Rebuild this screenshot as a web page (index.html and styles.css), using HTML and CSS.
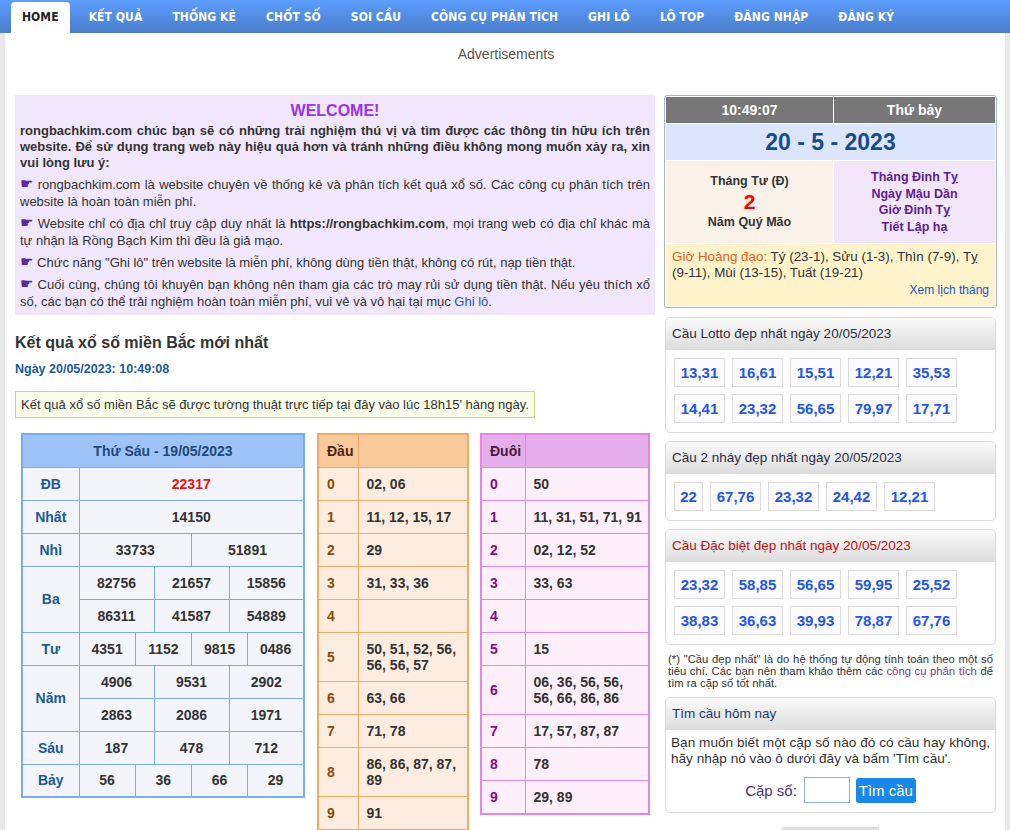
FILE: index.html
```html
<!DOCTYPE html>
<html lang="vi">
<head>
<meta charset="utf-8">
<title>Rồng Bạch Kim</title>
<link rel="stylesheet" href="styles.css">
</head>
<body>
<nav class="nav">
  <ul class="nav-list">
    <li class="nav-item active">HOME</li>
    <li class="nav-item">KẾT QUẢ</li>
    <li class="nav-item">THỐNG KÊ</li>
    <li class="nav-item">CHỐT SỐ</li>
    <li class="nav-item">SOI CẦU</li>
    <li class="nav-item">CÔNG CỤ PHÂN TÍCH</li>
    <li class="nav-item">GHI LÔ</li>
    <li class="nav-item">LÔ TOP</li>
    <li class="nav-item">ĐĂNG NHẬP</li>
    <li class="nav-item">ĐĂNG KÝ</li>
  </ul>
</nav>
<div class="page">
  <div class="ads-top">Advertisements</div>
  <div class="main">
    <div class="left">
      <div class="welcome">
        <div class="welcome-title">WELCOME!</div>
        <p class="intro">rongbachkim.com chúc bạn sẽ có những trải nghiệm thú vị và tìm được các thông tin hữu ích trên website. Để sử dụng trang web này hiệu quả hơn và tránh những điều không mong muốn xảy ra, xin vui lòng lưu ý:</p>
        <p><span class="hand">☛</span> rongbachkim.com là website chuyên về thống kê và phân tích kết quả xổ số. Các công cụ phân tích trên website là hoàn toàn miễn phí.</p>
        <p><span class="hand">☛</span> Website chỉ có địa chỉ truy cập duy nhất là <b>https://rongbachkim.com</b>, mọi trang web có địa chỉ khác mà tự nhận là Rồng Bạch Kim thì đều là giả mạo.</p>
        <p><span class="hand">☛</span> Chức năng "Ghi lô" trên website là miễn phí, không dùng tiền thật, không có rút, nạp tiền thật.</p>
        <p><span class="hand">☛</span> Cuối cùng, chúng tôi khuyên bạn không nên tham gia các trò may rủi sử dụng tiền thật. Nếu yêu thích xổ số, các bạn có thể trải nghiệm hoàn toàn miễn phí, vui vẻ và vô hại tại mục <a class="link">Ghi lô</a>.</p>
      </div>

      <h2 class="kq-title">Kết quả xổ số miền Bắc mới nhất</h2>
      <div class="kq-date">Ngày 20/05/2023: 10:49:08</div>
      <div class="notice">Kết quả xổ số miền Bắc sẽ được tường thuật trực tiếp tại đây vào lúc 18h15' hàng ngày.</div>

      <div class="tables">
        <table class="kq">
          <colgroup>
            <col class="c-lbl"><col><col><col><col><col><col><col><col><col><col><col><col>
          </colgroup>
          <tr><th colspan="13" class="kq-head">Thứ Sáu - 19/05/2023</th></tr>
          <tr><td class="lbl">ĐB</td><td colspan="12" class="db">22317</td></tr>
          <tr><td class="lbl">Nhất</td><td colspan="12">14150</td></tr>
          <tr><td class="lbl">Nhì</td><td colspan="6">33733</td><td colspan="6">51891</td></tr>
          <tr><td class="lbl" rowspan="2">Ba</td><td colspan="4">82756</td><td colspan="4">21657</td><td colspan="4">15856</td></tr>
          <tr><td colspan="4">86311</td><td colspan="4">41587</td><td colspan="4">54889</td></tr>
          <tr><td class="lbl">Tư</td><td colspan="3">4351</td><td colspan="3">1152</td><td colspan="3">9815</td><td colspan="3">0486</td></tr>
          <tr><td class="lbl" rowspan="2">Năm</td><td colspan="4">4906</td><td colspan="4">9531</td><td colspan="4">2902</td></tr>
          <tr><td colspan="4">2863</td><td colspan="4">2086</td><td colspan="4">1971</td></tr>
          <tr><td class="lbl">Sáu</td><td colspan="4">187</td><td colspan="4">478</td><td colspan="4">712</td></tr>
          <tr><td class="lbl">Bảy</td><td colspan="3">56</td><td colspan="3">36</td><td colspan="3">66</td><td colspan="3">29</td></tr>
        </table>

        <table class="loto dau">
          <tr><th class="k">Đầu</th><th></th></tr>
          <tr><td class="k">0</td><td>02, 06</td></tr>
          <tr><td class="k">1</td><td>11, 12, 15, 17</td></tr>
          <tr><td class="k">2</td><td>29</td></tr>
          <tr><td class="k">3</td><td>31, 33, 36</td></tr>
          <tr><td class="k">4</td><td></td></tr>
          <tr><td class="k">5</td><td>50, 51, 52, 56,<br>56, 56, 57</td></tr>
          <tr><td class="k">6</td><td>63, 66</td></tr>
          <tr><td class="k">7</td><td>71, 78</td></tr>
          <tr><td class="k">8</td><td>86, 86, 87, 87,<br>89</td></tr>
          <tr><td class="k">9</td><td>91</td></tr>
        </table>

        <table class="loto duoi">
          <tr><th class="k">Đuôi</th><th></th></tr>
          <tr><td class="k">0</td><td>50</td></tr>
          <tr><td class="k">1</td><td>11, 31, 51, 71, 91</td></tr>
          <tr><td class="k">2</td><td>02, 12, 52</td></tr>
          <tr><td class="k">3</td><td>33, 63</td></tr>
          <tr><td class="k">4</td><td></td></tr>
          <tr><td class="k">5</td><td>15</td></tr>
          <tr><td class="k">6</td><td>06, 36, 56, 56,<br>56, 66, 86, 86</td></tr>
          <tr><td class="k">7</td><td>17, 57, 87, 87</td></tr>
          <tr><td class="k">8</td><td>78</td></tr>
          <tr><td class="k">9</td><td>29, 89</td></tr>
        </table>
      </div>
    </div>

    <div class="right">
      <div class="cal">
        <div class="cal-time">10:49:07</div>
        <div class="cal-day">Thứ bảy</div>
        <div class="cal-date">20 - 5 - 2023</div>
        <div class="cal-lunar">
          <div>Tháng Tư (Đ)</div>
          <div class="cal-num">2</div>
          <div>Năm Quý Mão</div>
        </div>
        <div class="cal-can">
          <div>Tháng Đinh Tỵ</div>
          <div>Ngày Mậu Dần</div>
          <div>Giờ Đinh Tỵ</div>
          <div>Tiết Lập hạ</div>
        </div>
        <div class="cal-hd">
          <div><span class="hd-lbl">Giờ Hoàng đạo:</span> Tý (23-1), Sửu (1-3), Thìn (7-9), Tỵ (9-11), Mùi (13-15), Tuất (19-21)</div>
          <div class="cal-link"><a class="link">Xem lịch tháng</a></div>
        </div>
      </div>

      <div class="panel">
        <div class="panel-head">Cầu Lotto đẹp nhất ngày 20/05/2023</div>
        <div class="panel-body nums">
          <span class="num">13,31</span><span class="num">16,61</span><span class="num">15,51</span><span class="num">12,21</span><span class="num">35,53</span>
          <span class="num">14,41</span><span class="num">23,32</span><span class="num">56,65</span><span class="num">79,97</span><span class="num">17,71</span>
        </div>
      </div>

      <div class="panel">
        <div class="panel-head">Cầu 2 nháy đẹp nhất ngày 20/05/2023</div>
        <div class="panel-body nums">
          <span class="num num-s">22</span><span class="num">67,76</span><span class="num">23,32</span><span class="num">24,42</span><span class="num">12,21</span>
        </div>
      </div>

      <div class="panel">
        <div class="panel-head red">Cầu Đặc biệt đẹp nhất ngày 20/05/2023</div>
        <div class="panel-body nums">
          <span class="num">23,32</span><span class="num">58,85</span><span class="num">56,65</span><span class="num">59,95</span><span class="num">25,52</span>
          <span class="num">38,83</span><span class="num">36,63</span><span class="num">39,93</span><span class="num">78,87</span><span class="num">67,76</span>
        </div>
      </div>

      <p class="footnote">(*) "Cầu đẹp nhất" là do hệ thống tự động tính toán theo một số tiêu chí. Các bạn nên tham khảo thêm các <a class="plink">công cụ phân tích</a> để tìm ra cặp số tốt nhất.</p>

      <div class="panel">
        <div class="panel-head navy">Tìm cầu hôm nay</div>
        <div class="panel-body find">
          <p class="find-text">Bạn muốn biết một cặp số nào đó có cầu hay không, hãy nhập nó vào ô dưới đây và bấm 'Tìm cầu'.</p>
          <div class="find-row">
            <label class="find-lbl">Cặp số:</label>
            <input class="find-input" type="text">
            <button class="find-btn">Tìm cầu</button>
          </div>
        </div>
      </div>

      <div class="ads-bottom"><span>Advertisements</span></div>
    </div>
  </div>
</div>
</body>
</html>
```

FILE: styles.css
```css
* { box-sizing: border-box; }
html, body { margin: 0; padding: 0; }
body {
  background: #e8e8e8;
  font-family: "Liberation Sans", Arial, sans-serif;
  font-size: 13px;
  color: #333;
  overflow: hidden;
}
.nav {
  height: 33px;
  background: linear-gradient(#5c9dfe, #4a7dca);
}
.nav-list {
  list-style: none;
  margin: 0;
  padding: 2px 0 0 11px;
  display: flex;
  gap: 8px;
}
.nav-item {
  height: 31px;
  line-height: 31px;
  padding: 0 11px;
  color: #fff;
  font-weight: bold;
  font-size: 12px;
  font-family: "DejaVu Sans Condensed", "DejaVu Sans", sans-serif;
  letter-spacing: 0.08px;
}
.nav-item.active {
  background: #fff;
  color: #222;
  border-radius: 4px 4px 0 0;
}
.page {
  width: 1000px;
  margin: 0 auto;
  background: #fff;
  padding: 0 8px 0 10px;
  min-height: 797px;
}
.ads-top {
  height: 62px;
  padding-top: 12px;
  text-align: center;
  font-size: 14px;
  line-height: 18px;
  color: #555;
}
.main {
  display: flex;
  gap: 9px;
  align-items: flex-start;
}
.left { width: 640px; }
.right { width: 333px; }

.welcome {
  background: #f0e7fc;
  padding: 4px 5px 5px;
  text-align: justify;
  font-size: 13px;
  line-height: 17px;
}
.welcome-title {
  text-align: center;
  color: #9933ee;
  font-weight: bold;
  font-size: 16px;
  line-height: 24px;
}
.welcome p { margin: 0 0 5px; }
.welcome p:last-child { margin-bottom: 0; }
.welcome p.intro { font-weight: bold; margin-bottom: 5px; line-height: 16px; }
.hand {
  font-family: "DejaVu Sans", sans-serif;
  color: #5b2a9c;
  font-size: 15px;
  line-height: 14px;
}
.link { color: #1a55cc; text-decoration: none; }

.kq-title {
  font-size: 16px;
  font-weight: bold;
  margin: 18px 0 0;
  line-height: 20px;
  color: #333;
}
.kq-date {
  margin-top: 9px;
  font-weight: bold;
  font-size: 12.5px;
  color: #1b5a9c;
  line-height: 15px;
}
.notice {
  display: inline-block;
  margin-top: 14px;
  border: 1px solid #b7e07c;
  background: #f8fce9;
  padding: 0 5px;
  height: 27px;
  line-height: 25px;
  font-size: 13px;
}

.tables {
  display: flex;
  align-items: flex-start;
  gap: 11px;
  margin-top: 15px;
  padding-left: 6px;
}
.kq {
  width: 284px;
  table-layout: fixed;
  border-collapse: collapse;
  border: 2px solid #79abf0;
  background: #f3f5fa;
}
.kq col.c-lbl { width: 57px; }
.kq th, .kq td {
  border: 1px solid #79abf0;
  height: 33px;
  padding: 0;
  text-align: center;
  font-weight: bold;
  font-size: 14px;
  line-height: 16px;
}
.kq th.kq-head {
  background: #9dc3f7;
  color: #1d4a7b;
}
.kq td.lbl { color: #1b5a96; }
.kq td.db { color: #ee1111; }

.loto {
  border-collapse: collapse;
  table-layout: fixed;
  font-size: 14px;
  font-weight: bold;
  line-height: 16px;
}
.loto th, .loto td {
  padding: 8px 8px;
  height: 33px;
  text-align: left;
  white-space: nowrap;
  vertical-align: middle;
}
.dau { width: 152px; border: 2px solid #f4a962; background: #fdede0; margin-left: 1px; }
.dau th, .dau td { border: 1px solid #f4a962; }
.dau th { background: #f9ca9c; color: #4e2410; }
.dau .k { width: 40px; }
.dau td.k { color: #8b4a06; }
.duoi { width: 170px; border: 2px solid #e584e1; background: #fdf0fb; }
.duoi th, .duoi td { border: 1px solid #e584e1; }
.duoi th { background: #e5ade9; color: #4a1a40; }
.duoi .k { width: 44px; }
.duoi td.k { color: #86088a; }

/* right column */
.cal {
  display: grid;
  grid-template-columns: 167px 1fr;
  gap: 1px;
  padding: 1px;
  border: 1px solid #a7b6cf;
  border-radius: 3px;
  background: #fff;
}
.cal-time, .cal-day {
  background: #777;
  color: #fff;
  font-weight: bold;
  font-size: 14px;
  height: 26px;
  line-height: 26px;
  text-align: center;
}
.cal-date {
  grid-column: 1 / 3;
  background: #dbe6fd;
  color: #1a4b8c;
  font-weight: bold;
  font-size: 23px;
  height: 36px;
  line-height: 36px;
  text-align: center;
}
.cal-lunar {
  background: #faf2e8;
  height: 82px;
  text-align: center;
  font-weight: bold;
  font-size: 12.5px;
  line-height: 16px;
  padding-top: 12px;
  color: #333;
}
.cal-num {
  color: #ff0000;
  font-size: 21px;
  line-height: 25px;
}
.cal-can {
  background: #f3e6fb;
  text-align: center;
  color: #5a1f8e;
  font-weight: bold;
  font-size: 12.5px;
  line-height: 16.7px;
  padding-top: 8px;
}
.cal-hd {
  grid-column: 1 / 3;
  background: #fff3cc;
  padding: 5px 6px 6px;
  font-size: 13.4px;
  line-height: 16px;
  color: #333;
  height: 62px;
}
.hd-lbl { color: #e2601c; }
.cal-link { text-align: right; font-size: 12px; margin-top: 1px; }

.panel {
  margin-top: 8px;
  border: 1px solid #d9d9d9;
  border-radius: 5px;
  margin-left: 1px;
  margin-right: 1px;
  background: #fff;
  overflow: hidden;
}
.cal + .panel { margin-top: 9px; }
.panel-head {
  height: 32px;
  line-height: 32px;
  padding: 0 6px;
  font-size: 13.5px;
  color: #2b2d40;
  background: linear-gradient(#fafafa, #dcdcdc);
}
.panel-head.red { color: #c40d0d; }
.panel-head.navy { color: #173a6a; }
.panel-body.nums {
  padding: 8px 8px 2px;
  display: flex;
  flex-wrap: wrap;
  gap: 0 7px;
}
.num {
  width: 51px;
  height: 29px;
  margin-bottom: 7px;
  border: 1px solid #dcdcdc;
  background: #fbfbfe;
  color: #2656e4;
  font-weight: bold;
  font-size: 15px;
  line-height: 27px;
  text-align: center;
}
.num-s { width: 29px; }

.footnote {
  margin: 8px 4px 8px 4px;
  font-size: 11.3px;
  line-height: 12px;
  text-align: justify;
  color: #333;
}
.plink { color: #6d3d8f; }
.footnote + .panel { margin-top: 0; }

.find { padding: 5px 5px 9px; }
.find-text {
  margin: 0;
  font-size: 13.6px;
  line-height: 16px;
  text-align: justify;
}
.find-row {
  margin-top: 10px;
  display: flex;
  justify-content: center;
  align-items: center;
  gap: 6px;
}
.find-lbl { font-size: 15px; color: #45337c; margin-right: 1px; }
.find-input {
  width: 46px;
  height: 26px;
  border: 1px solid #8cb0dc;
  padding: 0;
}
.find-btn {
  height: 25px;
  width: 60px;
  border: none;
  border-radius: 3px;
  background: #1a88e8;
  color: #fff;
  font-family: "Liberation Sans", Arial, sans-serif;
  font-size: 15px;
  padding: 0;
}
.ads-bottom {
  text-align: center;
  margin-top: 14px;
}
.ads-bottom span {
  display: inline-block;
  background: #dedede;
  color: #555;
  font-size: 13px;
  padding: 2px 4px;
}
```
